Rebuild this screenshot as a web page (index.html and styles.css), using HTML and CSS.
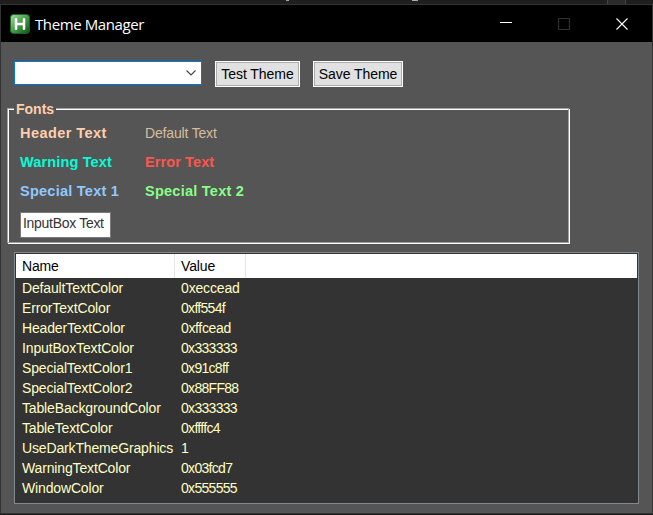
FILE: index.html
```html
<!DOCTYPE html>
<html lang="en">
<head>
<meta charset="utf-8">
<title>Theme Manager</title>
<link rel="stylesheet" href="styles.css">
</head>
<body>
<div class="backdrop"><i class="mark m1"></i><i class="mark m2"></i><i class="tab"></i></div>
<div class="window">
  <header class="titlebar">
    <svg class="logo" width="20" height="20" viewBox="0 0 20 20">
      <defs><linearGradient id="g" x1="0" y1="0" x2="1" y2="1"><stop offset="0" stop-color="#a4dda0"/><stop offset=".45" stop-color="#4fa34f"/><stop offset="1" stop-color="#0c5312"/></linearGradient></defs>
      <rect x=".5" y=".5" width="19" height="19" rx="3" fill="url(#g)" stroke="#1c6322"/>
      <path d="M6 5.2V14.8M14 5.2V14.8M6 10H14" stroke="#fff" stroke-width="2.5" stroke-linecap="round" fill="none"/>
    </svg>
    <h1 class="title">Theme Manager</h1>
    <div class="controls">
      <svg width="12" height="12" viewBox="0 0 12 12"><path d="M0 4.5H12" stroke="#fff"/></svg>
      <svg width="12" height="12" viewBox="0 0 12 12"><path d="M.5 .5H11.5V11.5H.5Z" stroke="#333" fill="none"/></svg>
      <svg width="12" height="12" viewBox="0 0 12 12"><path d="M.5 .5L11.5 11.5M11.5 .5L.5 11.5" stroke="#fff" stroke-width="1.1"/></svg>
    </div>
  </header>
  <main class="content">
    <div class="toolbar">
      <div class="combo"><svg width="10" height="6" viewBox="0 0 10 6"><path d="M.5 .5L5 5L9.5 .5" fill="none" stroke="#444" stroke-width="1.1"/></svg></div>
      <button class="btn test">Test Theme</button>
      <button class="btn save">Save Theme</button>
    </div>
    <section class="group">
      <div class="legend">Fonts</div>
      <div class="samples">
        <span class="header">Header Text</span><span class="default">Default Text</span>
        <span class="warning">Warning Text</span><span class="error">Error Text</span>
        <span class="special1">Special Text 1</span><span class="special2">Special Text 2</span>
      </div>
      <div class="inputbox">InputBox Text</div>
    </section>
    <div class="list">
      <div class="row head"><span>Name</span><span>Value</span></div>
      <div class="row"><span>DefaultTextColor</span><span>0xeccead</span></div>
      <div class="row"><span>ErrorTextColor</span><span class="tight">0xff554f</span></div>
      <div class="row"><span>HeaderTextColor</span><span class="snug">0xffcead</span></div>
      <div class="row"><span>InputBoxTextColor</span><span class="tight">0x333333</span></div>
      <div class="row"><span>SpecialTextColor1</span><span class="tight">0x91c8ff</span></div>
      <div class="row"><span>SpecialTextColor2</span><span class="tight">0x88FF88</span></div>
      <div class="row"><span>TableBackgroundColor</span><span class="tight">0x333333</span></div>
      <div class="row"><span>TableTextColor</span><span class="tight">0xffffc4</span></div>
      <div class="row"><span>UseDarkThemeGraphics</span><span>1</span></div>
      <div class="row"><span>WarningTextColor</span><span class="tight">0x03fcd7</span></div>
      <div class="row"><span>WindowColor</span><span class="tight">0x555555</span></div>
    </div>
  </main>
</div>
</body>
</html>
```
FILE: styles.css
```css
* { box-sizing: border-box; }
body { margin: 0; width: 653px; height: 515px; overflow: hidden; background: #1a1a1a; font: 14px/20px "Liberation Sans", Arial, sans-serif; }
.backdrop { position: relative; height: 4px; background: #1f1f1f; }
.mark { position: absolute; top: 0; height: 1px; background: #aaa; }
.m1 { left: 286px; width: 3px; }
.m2 { left: 412px; width: 6px; }
.tab { position: absolute; left: 607px; top: 0; width: 19px; height: 4px; background: #2b2b2b; border: solid #444; border-width: 0 1px; }
.window { height: 510px; border: 1px solid #333; background: #555; }
.titlebar { display: flex; align-items: center; height: 37px; padding: 0 24px 0 9px; background: #000; }
.logo { display: block; }
.title { margin: 0 auto 0 5px; color: #fff; font: 15px/20px "Open Sans", "Noto Sans", sans-serif; letter-spacing: -.4px; }
.controls { display: flex; gap: 46px; }
.controls svg { display: block; }
.content { padding: 19px 13px 0; }
.toolbar { display: flex; gap: 13px; height: 26px; }
.combo { display: flex; align-items: center; justify-content: flex-end; width: 188px; height: 24px; padding-right: 5px; border: 1px solid #0078d7; background: #fff; }
.btn { height: 26px; padding: 0 0 1px; border: 1px solid #fff; box-shadow: inset 0 0 0 1px #adadad; background: #e1e1e1; color: #000; font: 14px/20px "Liberation Sans", Arial, sans-serif; letter-spacing: -.05px; white-space: nowrap; }
.test { width: 85px; }
.save { width: 90px; }
.group { position: relative; width: 562px; height: 135px; margin: 21px 0 0 -7px; padding: 14px 0 0 12px; border: 1px solid #a0a0a0; box-shadow: 1px 1px #fff, inset 1px 1px #fff; }
.legend { position: absolute; left: 6px; top: -10px; width: 42px; padding-left: 2px; background: #555; color: #ffcead; font-weight: bold; }
.samples { display: grid; grid-template-columns: 125px 160px; grid-auto-rows: 29px; font-size: 14.5px; font-weight: bold; letter-spacing: .25px; white-space: nowrap; }
.header { color: #ffcead; letter-spacing: .45px; }
.samples .default { color: #d6bd9e; font-size: 14px; font-weight: normal; letter-spacing: -.17px; }
.warning { color: #03fcd7; letter-spacing: .15px; }
.error { color: #ff554f; letter-spacing: .1px; }
.special1 { color: #91c8ff; }
.special2 { color: #88ff88; }
.inputbox { width: 91px; height: 26px; margin-top: 2px; padding: 0 2px; border: 1px solid #7a7a7a; background: #fff; color: #333; letter-spacing: -.3px; white-space: nowrap; }
.list { width: 625px; height: 252px; margin-top: 9px; padding: 1px; border: 1px solid #828790; background: #333; color: #ffffc4; }
.row { display: grid; grid-template-columns: 159px 71px; height: 20px; line-height: 21px; white-space: nowrap; }
.row span { padding-left: 6px; letter-spacing: -.15px; }
.row .tight { letter-spacing: -.7px; }
.row .snug { letter-spacing: -.35px; }
.head { height: 24px; background: #fff; color: #000; line-height: 25px; }
.head span { height: 24px; border-right: 1px solid #e5e5e5; }
```
